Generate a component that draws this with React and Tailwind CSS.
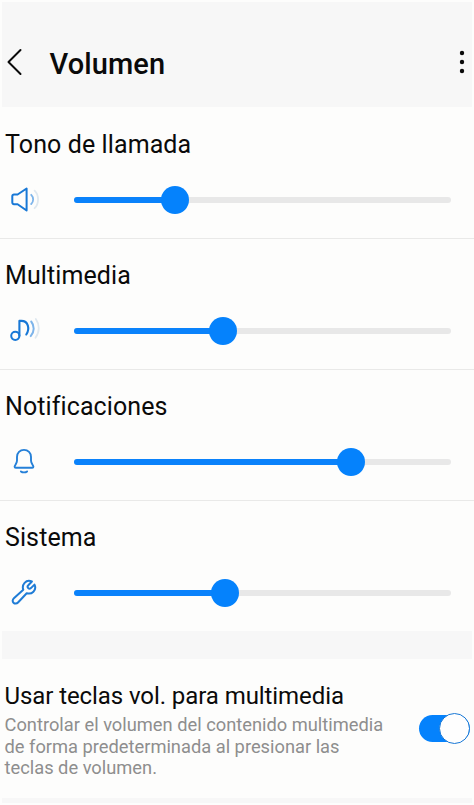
import React, { useState } from "react";

function SpeakerIcon() {
  return (
    <svg width="32" height="28" viewBox="0 0 32 28" fill="none" strokeLinecap="round" strokeLinejoin="round">
      <path d="M4 8.500h3.600l9-6v22l-9-6.300H4a1.700 1.700 0 0 1-1.700-1.700v-6.300A1.700 1.700 0 0 1 4 8.500z" stroke="#1878d6" strokeWidth="2" />
      <path d="M21.200 8.800c2.600 2.600 2.600 6.600 0 9.200" stroke="#7db4ea" strokeWidth="1.8" />
      <path d="M24.600 4.600c4.600 4.400 4.600 13.200 0 17.600" stroke="#dfe8ef" strokeWidth="1.8" />
    </svg>
  );
}

function MusicIcon() {
  return (
    <svg width="32" height="28" viewBox="0 0 32 28" fill="none" strokeLinecap="round">
      <circle cx="5.300" cy="18.800" r="4.100" stroke="#1878d6" strokeWidth="2" />
      <path d="M9.400 18.800V3.900h1.900c7.200 0 8.600 8 5 13.600" stroke="#1878d6" strokeWidth="2.100" strokeLinejoin="round" />
      <path d="M21.200 4.500c3.400 4.200 3.400 10.200-.5 14.600" stroke="#7db4ea" strokeWidth="2" />
      <path d="M25.800 1.900c4 5.600 4 13-.3 18.800" stroke="#dfe8ef" strokeWidth="1.800" />
    </svg>
  );
}

function BellIcon() {
  return (
    <svg width="32" height="28" viewBox="0 0 32 28" fill="none" stroke="#2580d8" strokeWidth="1.9" strokeLinecap="round" strokeLinejoin="round">
      <path d="M14 1.900c-4.100 0-7 3-7 7v3.600c0 1.600-.5 2.400-1.400 4-.6 1-1 1.600-1 2.200 0 .7.4 1.100 1.200 1.100h16.400c.8 0 1.200-.4 1.200-1.100 0-.6-.4-1.200-1-2.200-.9-1.600-1.400-2.400-1.400-4V8.900c0-4-2.900-7-7-7z" />
      <path d="M10.900 23.400c1.600 1.300 4.600 1.300 6.200 0" />
    </svg>
  );
}

function WrenchIcon() {
  return (
    <svg width="32" height="28" viewBox="0 0 32 28" fill="none" stroke="#1f7cd6" strokeWidth="2" strokeLinecap="round" strokeLinejoin="round">
      <path d="M21.900 2.500c-2.600-1.100-5.600-.5-7.300 1.400-1.800 2-2.200 4.500-1.300 6.900L3.900 19.300c-1.500 1.400-1.600 3.200-.4 4.400 1.300 1.300 3.200 1.200 4.500-.2l8.700-9.300c2.500.8 5 .2 6.700-1.500 1.900-1.900 2.300-4.600 1.100-7.100l-3.600 3.500c-.9.8-2 .7-2.700 0-.8-.8-.8-1.900.1-2.800z" />
    </svg>
  );
}

const CHANNELS = [
  { name: "Tono de llamada", icon: SpeakerIcon, value: 101 },
  { name: "Multimedia", icon: MusicIcon, value: 148.5 },
  { name: "Notificaciones", icon: BellIcon, value: 276.5 },
  { name: "Sistema", icon: WrenchIcon, value: 151 },
];

const TRACK = 377;

function Slider({ value }) {
  const pct = (value / TRACK) * 100 + "%";
  return (
    <div className="relative h-[5.5px] w-[377px] rounded-full bg-[#e8e8e8]">
      <div className="h-full rounded-full bg-[#0a82fb]" style={{ width: pct }} />
      <div
        className="absolute top-1/2 size-7 -translate-x-1/2 -translate-y-1/2 rounded-full bg-[#0582fc]"
        style={{ left: pct }}
      />
    </div>
  );
}

function VolumeRow({ name, icon: Icon, value, last }) {
  return (
    <div className={last ? "h-[130px]" : "h-[131px] border-b-[1.5px] border-[#e9e9e8]"}>
      <h2 className="pl-[5px] pt-[21px] text-[25px] leading-8 tracking-[0.1px]">{name}</h2>
      <div className="mt-[25px] flex h-7 items-center pl-[10px]">
        <Icon />
        <div className="ml-8">
          <Slider value={value} />
        </div>
      </div>
    </div>
  );
}

export default function App() {
  const [useKeys, setUseKeys] = useState(true);

  return (
    <div className="h-[805px] w-[474px] overflow-hidden bg-[#fdfdfc] pt-0.5 font-['Roboto',sans-serif] text-[#0a0a0a]">
      <header className="mx-0.5 flex h-[105px] items-center bg-[#f7f7f7]">
        <svg className="ml-[5px] mt-[15px]" width="16" height="28" viewBox="0 0 16 28" fill="none" stroke="#0a0a0a" strokeWidth="2" strokeLinecap="round" strokeLinejoin="round">
          <path d="M13.500 2L1.500 14l12 12" />
        </svg>
        <h1 className="ml-[26.5px] mt-[18px] text-[29px] font-medium leading-9 tracking-[0.1px]">Volumen</h1>
        <svg className="ml-auto mr-[7px] mt-[15px]" width="6" height="24" viewBox="0 0 6 24" fill="#0a0a0a">
          <circle cx="3" cy="3" r="2.200" />
          <circle cx="3" cy="12" r="2.200" />
          <circle cx="3" cy="21" r="2.200" />
        </svg>
      </header>

      <main className="pt-px">
        {CHANNELS.map((c, i) => (
          <VolumeRow key={c.name} {...c} last={i === CHANNELS.length - 1} />
        ))}

        <div className="mx-0.5 h-7 bg-[#f7f7f7]" />

        <section className="flex h-[139px] items-start">
          <div className="pl-[4.5px] pt-[21px]">
            <h2 className="whitespace-nowrap text-[24px] leading-8 tracking-[-0.08px]">Usar teclas vol. para multimedia</h2>
            <p className="w-[400px] pt-[2px] text-[18.3px] leading-[21.5px] text-[#8e8e8e]">
              Controlar el volumen del contenido multimedia
              <br />
              de forma predeterminada al presionar las
              <br />
              teclas de volumen.
            </p>
          </div>
          <button
            role="switch"
            aria-checked={useKeys}
            onClick={() => setUseKeys(!useKeys)}
            className="ml-auto mr-[4px] mt-[54px] flex h-[31px] w-[51px] shrink-0 items-center"
          >
            <span className={useKeys ? "flex h-[27px] w-[51px] items-center justify-end rounded-full bg-[#0582fc]" : "flex h-[27px] w-[51px] items-center rounded-full bg-[#d0d0d0]"}>
              <span className="size-[31px] shrink-0 rounded-full border border-[#1878d6] bg-[#fefefe]" />
            </span>
          </button>
        </section>

        <div className="mx-0.5 h-[5px] bg-[#f7f7f7]" />
      </main>
    </div>
  );
}
